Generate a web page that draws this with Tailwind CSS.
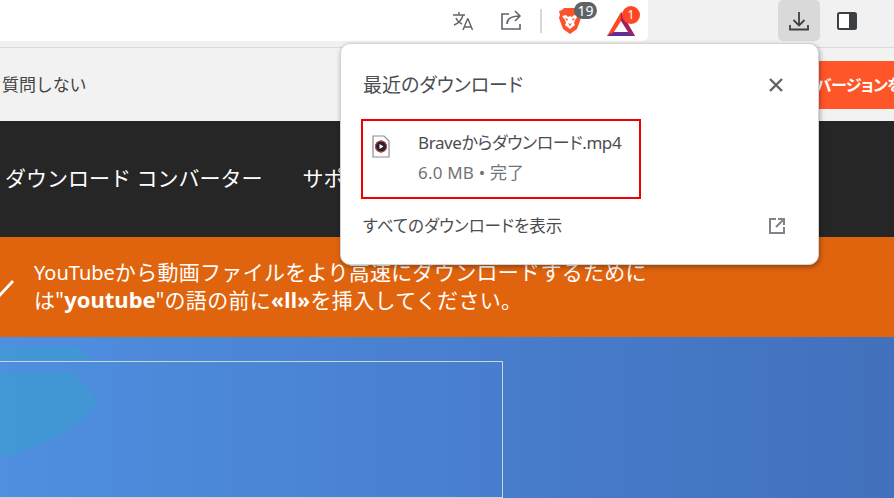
<!DOCTYPE html>
<html lang="ja">
<head>
    <meta charset="UTF-8">
    <title>Downloads</title>
    <script src="https://cdn.jsdelivr.net/npm/@tailwindcss/browser@4"></script>
</head>
<body class="relative w-[894px] h-[498px] overflow-hidden bg-white font-['Noto_Sans','Noto_Sans_CJK_JP',sans-serif]">
    <!-- Browser toolbar -->
    <header class="h-[48px] bg-[#f1f1f1] border-b border-[#dadada] flex items-start">
        <div class="w-[648px] h-[41px] bg-white rounded-br-[6px] flex items-center justify-end pr-[9px]">
            <svg class="w-[24px] h-[24px] mr-[24px]" viewBox="0 0 24 24" fill="none" stroke="#5f6368" stroke-width="1.4">
                <path d="M2 6h12M8 3v3M12 6c-1 4-4 8-9 10M5 9c1 3 4 5 6 6"/>
                <path d="M12 21l4.500-11h.5l4.500 11M13.500 18h7"/>
            </svg>
            <svg class="w-[24px] h-[24px] mr-[17px]" viewBox="0 0 24 24" fill="none" stroke="#5f6368" stroke-width="1.600">
                <path d="M10 5H3v15h18v-5"/>
                <path d="M8 15c0-5 4-8 13-8M16 2l5 5-5 5" stroke-linejoin="round"/>
            </svg>
            <div class="w-[2px] h-[24px] bg-[#d8d8d8] mr-[16px]"></div>
            <div class="relative w-[46px] h-[30px] mr-[3px]">
                <svg class="absolute left-0 top-[1px] w-[24px] h-[28px]" viewBox="0 0 24 28">
                    <path d="M6 1h12l2 2 3 1-1 4 1 3-4 11-7 5-7-5L1 11l1-3-1-4 3-1z" fill="#fb542b"/>
                    <path d="M4 9l4-1 2 2 2-1 2 1 2-2 4 1-3 4-1 3 1 2-5 4-5-4 1-2-1-3z" fill="#fff"/>
                    <path d="M7 11l3 1-1 2zM17 11l-3 1 1 2zM10 16l2 1 2-1-2 3zM10 22h4l-2 2z" fill="#fb542b"/>
                </svg>
                <span class="absolute left-[16px] top-[-4px] w-[23px] h-[17px] rounded-full bg-[#5f6368] text-white text-[14px] leading-[17px] text-center">19</span>
            </div>
            <div class="relative w-[34px] h-[30px] -mr-[2px]">
                <svg class="absolute left-0 top-[5px] w-[28px] h-[26px]" viewBox="0 0 28 26">
                    <path d="M0 25L14 1l14 24z" fill="#ff4724"/>
                    <path d="M14 1l14 24-7-4-7-11z" fill="#9e1f63"/>
                    <path d="M0 25l7-4h14l7 4z" fill="#662d91"/>
                    <path d="M14 10l7 11H7z" fill="#fff"/>
                </svg>
                <span class="absolute left-[15px] top-[0px] w-[18px] h-[18px] rounded-full bg-[#ff4724] text-white text-[12px] leading-[18px] text-center">1</span>
            </div>
        </div>
        <div class="flex-1 h-[41px] flex items-start justify-end pr-[37px]">
            <button class="w-[42px] h-[41px] bg-[#d9d9da] rounded-[5px] flex items-center justify-center mr-[17px]">
                <svg class="w-[24px] h-[24px]" viewBox="0 0 24 24" fill="none" stroke="#3c4043" stroke-width="1.800">
                    <path d="M12 3v13M6.500 11l5.500 5.500 5.500-5.500M3 16v4.500h18V16"/>
                </svg>
            </button>
            <div class="h-[41px] flex items-center">
                <svg class="w-[20px] h-[18px]" viewBox="0 0 20 18">
                    <rect x="1" y="1" width="18" height="16" rx="1.500" fill="#fff" stroke="#3c4043" stroke-width="2"/>
                    <rect x="12" y="1" width="7" height="16" fill="#3c4043"/>
                </svg>
            </div>
        </div>
    </header>

    <!-- Page -->
    <main>
        <div class="h-[73px] bg-[#f2f2f2] flex items-center justify-between pl-[2px]">
            <span class="text-[17px] text-[#444] tracking-[-0.1px]">質問しない</span>
            <div class="w-[130px] h-[48px] bg-[#ff5629] text-white font-bold text-[16px] leading-[48px] whitespace-nowrap pl-[52px] [font-feature-settings:'palt'] tracking-[-0.6px]">バージョンを</div>
        </div>
        <nav class="h-[116px] bg-[#262626] flex items-center gap-[40px] pl-[5px] text-white text-[21px] whitespace-nowrap">
            <span>ダウンロード コンバーター</span>
            <span>サポート</span>
        </nav>
        <div class="h-[100px] bg-[#e0640e] relative pl-[34px] pt-[22px] text-white text-[21px] leading-[27px] tracking-[0.3px]">
            <svg class="absolute left-0 top-[40px] w-[14px] h-[20px]" viewBox="0 0 14 20" fill="none" stroke="#fff" stroke-width="2.800">
                <path d="M-4 12l4 6L13 4"/>
            </svg>
            <p class="w-[640px] whitespace-nowrap"><span class="text-[20px] tracking-normal">YouTube</span>から動画ファイルをより高速にダウンロードするために<br>は"<b class="text-[22px] tracking-normal">youtube</b>"の語の前に<b>«ll»</b>を挿入してください。</p>
        </div>
        <section class="h-[161px] relative bg-gradient-to-r from-[#4f8fe0] to-[#4270bd] pt-[24px]">
            <!-- dotted fan artwork, bleeding off the left edge -->
            <div class="absolute inset-0 bg-[repeating-conic-gradient(#36a0cc_0_25%,transparent_0_50%)] bg-[length:2px_2px] [clip-path:polygon(0_10px,78px_10px,92px_24px,0_24px)]"></div>
            <div class="absolute inset-0 bg-[repeating-conic-gradient(#36a0cc_0_25%,transparent_0_50%)] bg-[length:2px_2px] [clip-path:polygon(0_35px,72px_35px,85px_47px,98px_66px,84px_82px,60px_98px,36px_108px,12px_118px,0_120px)]"></div>
            <div class="relative w-[503px] h-[137px] border-t border-r border-b border-[#cfd3d8]"></div>
        </section>
    </main>

    <!-- Download bubble -->
    <div class="absolute left-[340px] top-[43px] w-[479px] h-[222px] bg-white rounded-[10px] border border-[#d4d4d4] shadow-[1px_2px_5px_rgba(0,0,0,0.35)] pl-[22px] pr-[32px] text-[#5f6368] [font-feature-settings:'palt']">
        <div class="h-[75px] flex items-center justify-between pt-[7px]">
            <h2 class="text-[19px] text-[#4a4e52]">最近のダウンロード</h2>
            <svg class="w-[18px] h-[18px] mr-[1px]" viewBox="0 0 18 18" fill="none" stroke="#5f6368" stroke-width="2.400">
                <path d="M3 3l12 12M15 3L3 15"/>
            </svg>
        </div>
        <div class="w-[280px] h-[80px] -ml-[2px] border-2 border-[#f00000] flex items-start pl-[9px] pt-[12px]">
            <svg class="w-[18px] h-[23px] mt-[2px] shrink-0" viewBox="0 0 18 23">
                <path d="M1 1h11l5 5v16H1z" fill="#fff" stroke="#8a8d91" stroke-width="1.200"/>
                <circle cx="9" cy="11.500" r="6" fill="#2b2230"/>
                <circle cx="9" cy="11.500" r="5.500" fill="none" stroke="#e0523c" stroke-width="1"/>
                <path d="M7.500 9l4 2.500-4 2.500z" fill="#fff"/>
            </svg>
            <div class="ml-[28px] -mt-[2px]">
                <p class="text-[17px] leading-[24px] text-[#4a4e52] whitespace-nowrap tracking-[-0.4px]">Braveからダウンロード.mp4</p>
                <p class="text-[17px] leading-[22px] mt-[7px] text-[#70757a] tracking-[0.2px]">6.0 MB • 完了</p>
            </div>
        </div>
        <div class="h-[54px] flex items-center justify-between">
            <span class="text-[16.500px] text-[#4a4e52]">すべてのダウンロードを表示</span>
            <svg class="w-[18px] h-[18px]" viewBox="0 0 18 18" fill="none" stroke="#808488" stroke-width="2">
                <path d="M8 2H2v14h14v-6M10 2h6v6M16 2L8 10"/>
            </svg>
        </div>
    </div>
</body>
</html>
